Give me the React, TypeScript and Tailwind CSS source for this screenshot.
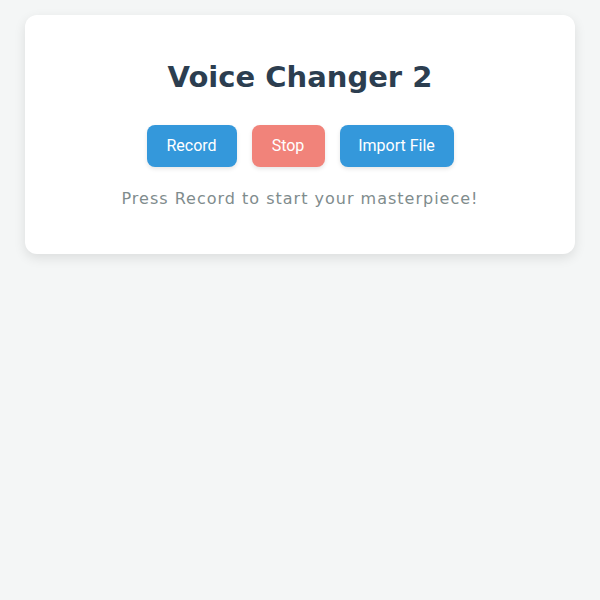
export default function App() {
  return (
    <div className="min-h-[600px] w-full bg-[#f4f6f6] px-[25px] pt-[15px]">
      <div className="flex flex-col items-center rounded-[12px] bg-white px-10 pb-[43px] pt-[45px] shadow-[0_4px_12px_rgba(0,0,0,0.1)]">
        <h1 className="text-[29px] font-bold leading-[1.2] text-[#2c3e50]" style={{ fontFamily: '"DejaVu Sans", Verdana, sans-serif' }}>
          Voice Changer 2
        </h1>
        <div className="mt-[30px] flex gap-[15px]" style={{ fontFamily: 'Roboto, sans-serif' }}>
          <button className="h-[42px] w-[90px] rounded-[8px] bg-[#3498db] text-[16px] font-normal text-white shadow-[0_2px_4px_rgba(0,0,0,0.1)]">Record</button>
          <button className="h-[42px] w-[73px] rounded-[8px] bg-[#f1837a] text-[16px] font-normal text-white shadow-[0_2px_4px_rgba(0,0,0,0.1)]">Stop</button>
          <button className="h-[42px] w-[114px] rounded-[8px] bg-[#3498db] text-[16px] font-normal text-white shadow-[0_2px_4px_rgba(0,0,0,0.1)]">Import File</button>
        </div>
        <p className="mt-[20px] text-[16px] leading-[24px] tracking-[1px] text-[#7f8c8d]" style={{ fontFamily: '"DejaVu Sans", sans-serif' }}>
          Press Record to start your masterpiece!
        </p>
      </div>
    </div>
  );
}
